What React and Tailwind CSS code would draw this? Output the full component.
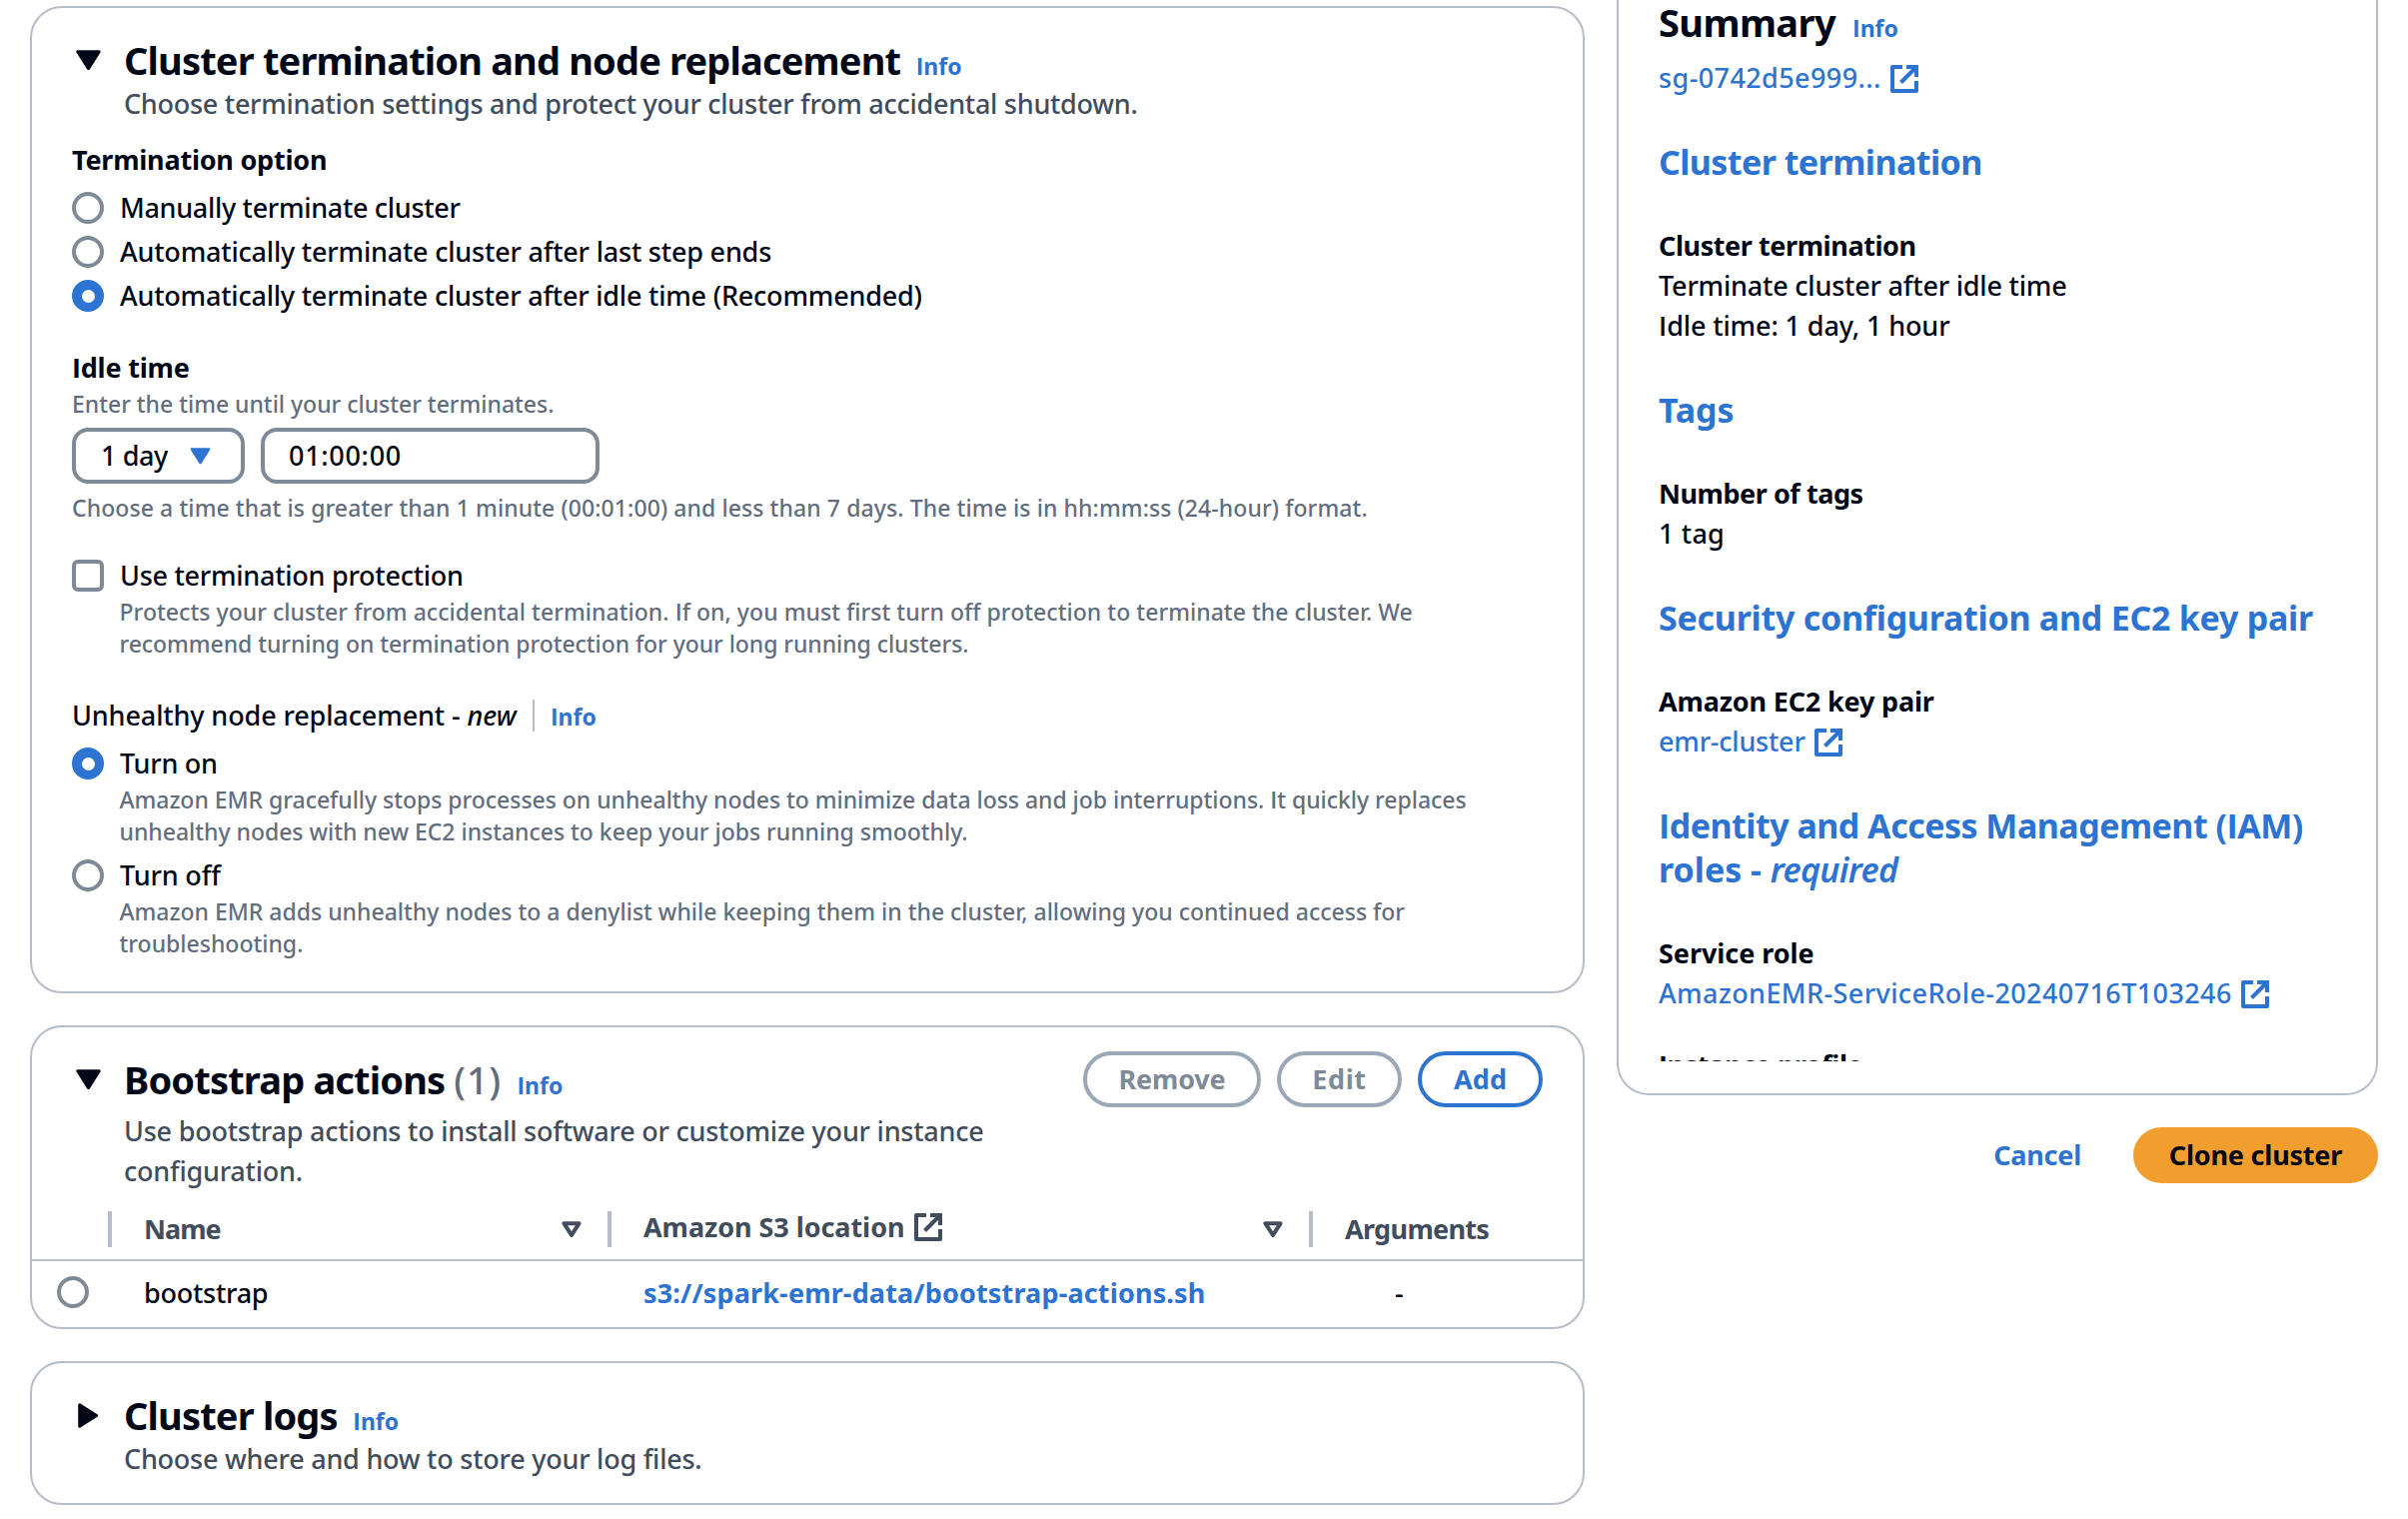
import React from "react";

function Tx({ children, className = "" }) {
  return children.split(/(I)/).map((part, i) =>
    part === "I" ? <span key={i} className={`font-['Open_Sans',sans-serif] ${className}`}>I</span> : part
  );
}

function Caret({ className }) {
  return (
    <svg viewBox="0 0 25 21" className={className} fill="currentColor" stroke="currentColor" strokeWidth="3" strokeLinejoin="round">
      <path d="M1.8 1.7H23.2L12.5 18.6Z" />
    </svg>
  );
}

function SortIcon() {
  return (
    <svg viewBox="0 0 20 17" className="h-[17px] w-5 shrink-0" fill="none" stroke="currentColor" strokeWidth="4" strokeLinejoin="round">
      <path d="M2.4 2.2H17.6L10 14Z" />
    </svg>
  );
}

function External({ className = "" }) {
  return (
    <svg viewBox="0 0 28 28" className={`size-7 shrink-0 ${className}`} fill="none" stroke="currentColor" strokeWidth="4" strokeLinejoin="round">
      <path d="M12 2H2V26H26V16" />
      <path d="M16 2H26V12" strokeLinejoin="miter" />
      <path d="M25 3L10.5 17.5" />
    </svg>
  );
}

function Info({ className = "" }) {
  return <a className={`text-[23px] font-bold text-[#2c73d2] ${className}`}><Tx>Info</Tx></a>;
}

function Radio({ checked }) {
  return checked ? (
    <span className="flex size-8 shrink-0 items-center justify-center rounded-full bg-[#2c73d2]">
      <span className="size-[13px] rounded-full bg-white" />
    </span>
  ) : (
    <span className="size-8 shrink-0 rounded-full border-4 border-[#7f8a99]" />
  );
}

function Option({ checked, label, className = "" }) {
  return (
    <div className="flex h-10 items-center gap-4">
      <Radio checked={checked} />
      <span className={className}>{label}</span>
    </div>
  );
}

function Hint({ className = "", children }) {
  return <p className={`text-[23px] leading-8 text-[#626e7e] ${className}`}><Tx className="font-semibold">{children}</Tx></p>;
}

function Card({ className = "", children }) {
  return <section className={`rounded-[32px] border-2 border-[#b6bdc9] bg-white ${className}`}>{children}</section>;
}

function Title({ children, open = true, count }) {
  return (
    <div className="flex h-12 items-baseline leading-[48px]">
      <span className="flex h-12 w-[52px] items-start self-start pl-[3.5px] pt-[14px]">
        <Caret className={open ? "h-[21px] w-[25px]" : "h-[21px] w-[25px] -rotate-90"} />
      </span>
      <h2 className="text-[38px] font-bold tracking-[-0.83px]">{children}</h2>
      {count && <span className="ml-[9px] text-[38px] tracking-[0.7px] text-[#626e7e]">{count}</span>}
      <Info className="ml-[15.5px]" />
    </div>
  );
}

function HeaderCell({ children, className = "", icon }) {
  return (
    <div className={`flex h-9 items-center border-l-4 border-[#b6bdc9] pl-8 ${className}`}>
      {children}
      {icon && <span className="ml-auto mr-[26px]"><SortIcon /></span>}
    </div>
  );
}

function Left() {
  return (
    <div className="flex w-[1556px] flex-col gap-8 pt-1.5">
      <Card className="h-[988px] px-10 pt-7">
        <Title>Cluster termination and node replacement</Title>
        <p className="ml-[52px] tracking-[-0.27px] text-[#414d5c]">Choose termination settings and protect your cluster from accidental shutdown.</p>

        <h3 className="mt-4 font-bold tracking-[-0.23px]">Termination option</h3>
        <div className="mt-2 flex flex-col gap-1">
          <Option label="Manually terminate cluster" className="tracking-[-0.31px]" />
          <Option label="Automatically terminate cluster after last step ends" className="tracking-[-0.2px]" />
          <Option checked label="Automatically terminate cluster after idle time (Recommended)" className="tracking-[-0.21px]" />
        </div>

        <h3 className="mt-8 font-bold tracking-[-0.2px]"><Tx>Idle time</Tx></h3>
        <Hint className="tracking-[-0.02px]">Enter the time until your cluster terminates.</Hint>
        <div className="mt-2 flex gap-4">
          <div className="flex h-14 w-[173px] items-center rounded-2xl border-4 border-[#7f8a99] pl-[25px]">
            <span className="tracking-[-0.4px]">1 day</span>
            <Caret className="ml-[22px] h-[17px] w-[21px] text-[#2c73d2]" />
          </div>
          <div className="flex h-14 w-[339px] items-center rounded-2xl border-4 border-[#7f8a99] pl-6 tracking-[0.7px]">01:00:00</div>
        </div>
        <Hint className="mt-2 tracking-[0.09px]">Choose a time that is greater than 1 minute (00:01:00) and less than 7 days. The time is in hh:mm:ss (24-hour) format.</Hint>

        <div className="mt-8 flex h-10 items-center gap-4">
          <span className="size-8 rounded-md border-4 border-[#7f8a99]" />
          <span className="tracking-[-0.26px]">Use termination protection</span>
        </div>
        <div className="ml-[47.5px]">
          <Hint className="tracking-[0.04px]">Protects your cluster from accidental termination. If on, you must first turn off protection to terminate the cluster. We</Hint>
          <Hint className="tracking-[-0.06px]">recommend turning on termination protection for your long running clusters.</Hint>
        </div>

        <div className="mt-9 flex h-10 items-baseline">
          <span className="tracking-[-0.12px]">Unhealthy node replacement - <i className="tracking-[0.1px]">new</i></span>
          <span className="ml-4 h-8 w-0.5 self-center bg-[#b6bdc9]" />
          <Info className="ml-4" />
        </div>
        <div className="mt-2 flex flex-col gap-2">
          <div>
            <Option checked label="Turn on" className="tracking-[-0.25px]" />
            <div className="ml-[47.5px]">
              <Hint className="tracking-[-0.03px]">Amazon EMR gracefully stops processes on unhealthy nodes to minimize data loss and job interruptions. It quickly replaces</Hint>
              <Hint className="tracking-[-0.02px]">unhealthy nodes with new EC2 instances to keep your jobs running smoothly.</Hint>
            </div>
          </div>
          <div>
            <Option label="Turn off" className="tracking-[-0.15px]" />
            <div className="ml-[47.5px]">
              <Hint>Amazon EMR adds unhealthy nodes to a denylist while keeping them in the cluster, allowing you continued access for</Hint>
              <Hint>troubleshooting.</Hint>
            </div>
          </div>
        </div>
      </Card>

      <Card className="flex h-[304px] flex-col">
        <div className="flex justify-between pl-10 pr-10 pt-6">
          <div className="pt-1">
            <Title count="(1)">Bootstrap actions</Title>
            <p className="ml-[52px] mt-2 tracking-[-0.23px] text-[#414d5c]">
              Use bootstrap actions to install software or customize your instance<br />configuration.
            </p>
          </div>
          <div className="flex gap-4 font-bold leading-[48px]">
            <button className="h-14 w-[178px] rounded-full border-4 border-[#9ba7b6] tracking-[-0.18px] text-[#7f8a99]">Remove</button>
            <button className="h-14 w-[125px] rounded-full border-4 border-[#9ba7b6] tracking-[0.6px] text-[#7f8a99]">Edit</button>
            <button className="h-14 w-[125px] rounded-full border-4 border-[#2c73d2] tracking-[0.13px] text-[#2c73d2]">Add</button>
          </div>
        </div>
        <div className="mt-5 grid h-[50px] grid-cols-[76px_500px_702px_1fr] border-b-2 border-[#b6bdc9] font-bold text-[#414d5c]">
          <span />
          <HeaderCell icon className="tracking-[-0.95px]">Name</HeaderCell>
          <HeaderCell icon>
            <span className="mt-[-4px] flex items-center tracking-[-0.06px]">Amazon S3 location<External className="ml-[10px]" /></span>
          </HeaderCell>
          <HeaderCell className="tracking-[-0.68px]">Arguments</HeaderCell>
        </div>
        <div className="grid h-[63px] grid-cols-[76px_500px_702px_1fr] items-center">
          <span className="-mt-0.5 flex pl-[25px]"><Radio /></span>
          <span className="pl-9 tracking-[-0.25px]">bootstrap</span>
          <a className="pl-9 font-bold tracking-[0.15px] text-[#2c73d2]">s3://spark-emr-data/bootstrap-actions.sh</a>
          <span className="pl-[86px]">-</span>
        </div>
      </Card>

      <Card className="h-36 px-10 pt-7">
        <Title open={false}>Cluster logs</Title>
        <p className="ml-[52px] tracking-[-0.24px] text-[#414d5c]">Choose where and how to store your log files.</p>
      </Card>
    </div>
  );
}

function Heading({ children }) {
  return <h3 className="my-[42px] text-[34px] font-bold leading-[44px] text-[#2c73d2]">{children}</h3>;
}

function Link({ children, className = "" }) {
  return (
    <a className="flex items-center text-[#2c73d2]">
      <span className={className}>{children}</span>
      <External className="ml-[9.5px] mt-0.5" />
    </a>
  );
}

function Right() {
  return (
    <div className="flex w-[762px] flex-col">
      <Card className="h-[1096px] rounded-t-none border-t-0 px-10">
        <div className="h-[1062px] overflow-hidden">
          <div className="mt-[-2px] flex h-12 items-baseline leading-[48px]">
            <h2 className="text-[38px] font-bold tracking-[-0.6px]">Summary</h2>
            <Info className="ml-[17px]" />
          </div>
          <div className="mt-3"><Link className="tracking-[0.4px]">sg-0742d5e999...</Link></div>

          <Heading><span className="tracking-[-0.57px]">Cluster termination</span></Heading>
          <p className="font-bold tracking-[-0.42px]">Cluster termination</p>
          <p className="tracking-[-0.2px]">Terminate cluster after idle time</p>
          <p className="tracking-[-0.12px]"><Tx className="font-semibold">Idle time: 1 day, 1 hour</Tx></p>

          <Heading><span className="tracking-[-0.1px]">Tags</span></Heading>
          <p className="font-bold tracking-[-0.45px]">Number of tags</p>
          <p className="tracking-[0.2px]">1 tag</p>

          <Heading><span className="tracking-[-0.26px]">Security configuration and EC2 key pair</span></Heading>
          <p className="font-bold tracking-[-0.17px]">Amazon EC2 key pair</p>
          <Link className="tracking-[-0.22px]">emr-cluster</Link>

          <Heading>
            <span className="tracking-[-0.52px]"><Tx>Identity and Access Management (IAM)</Tx></span><br />
            <span>roles - <i className="font-semibold tracking-[-0.7px]">required</i></span>
          </Heading>
          <p className="font-bold tracking-[-0.05px]">Service role</p>
          <Link className="tracking-[0.4px]">AmazonEMR-ServiceRole-20240716T103246</Link>
          <p className="mt-8 font-bold tracking-[-0.4px]"><Tx>Instance profile</Tx></p>
        </div>
      </Card>
      <div className="mt-8 flex items-center justify-end gap-[52px] font-bold">
        <a className="tracking-[-0.22px] text-[#2c73d2]">Cancel</a>
        <button className="h-14 w-[245px] rounded-full bg-[#f19e2f] tracking-[-0.2px]">Clone cluster</button>
      </div>
    </div>
  );
}

export default function App() {
  return (
    <main className="flex h-[1520px] w-[2410px] gap-8 overflow-hidden bg-white pl-[30px] font-['Noto_Sans',sans-serif] text-[27px] font-medium leading-10 text-[#000716]">
      <Left />
      <Right />
    </main>
  );
}
